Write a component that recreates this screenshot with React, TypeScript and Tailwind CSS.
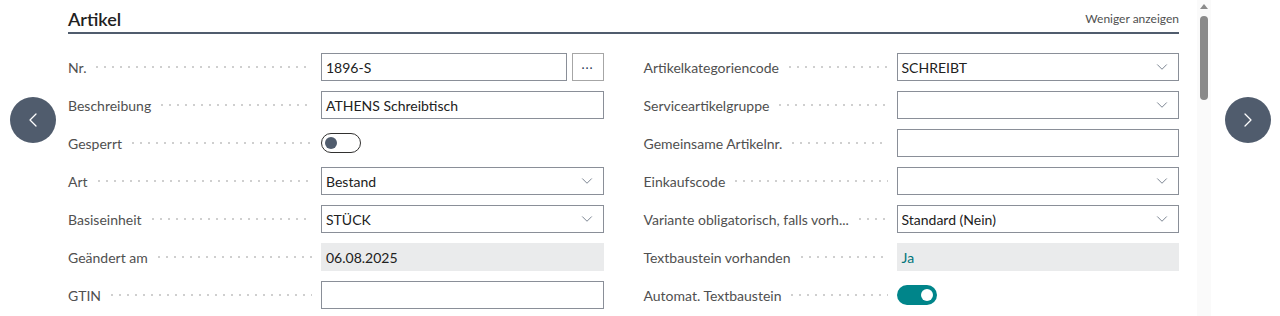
import { ChevronDown, ChevronLeft, ChevronRight } from 'lucide-react';

type Field = {
  label: string;
  kind: 'text' | 'select' | 'readonly' | 'toggle' | 'lookup';
  value?: string;
  on?: boolean;
  teal?: boolean;
};

const left: Field[] = [
  { label: 'Nr.', kind: 'lookup', value: '1896-S' },
  { label: 'Beschreibung', kind: 'text', value: 'ATHENS Schreibtisch' },
  { label: 'Gesperrt', kind: 'toggle', on: false },
  { label: 'Art', kind: 'select', value: 'Bestand' },
  { label: 'Basiseinheit', kind: 'select', value: 'STÜCK' },
  { label: 'Geändert am', kind: 'readonly', value: '06.08.2025' },
  { label: 'GTIN', kind: 'text', value: '' },
];

const right: Field[] = [
  { label: 'Artikelkategoriencode', kind: 'select', value: 'SCHREIBT' },
  { label: 'Serviceartikelgruppe', kind: 'select', value: '' },
  { label: 'Gemeinsame Artikelnr.', kind: 'text', value: '' },
  { label: 'Einkaufscode', kind: 'select', value: '' },
  { label: 'Variante obligatorisch, falls vorh...', kind: 'select', value: 'Standard (Nein)' },
  { label: 'Textbaustein vorhanden', kind: 'readonly', value: 'Ja', teal: true },
  { label: 'Automat. Textbaustein', kind: 'toggle', on: true },
];

function Control({ f }: { f: Field }) {
  if (f.kind === 'toggle') {
    return f.on ? (
      <div className="h-[20px] w-[40px] rounded-full bg-[#00858a] flex items-center justify-end pr-[4px]">
        <div className="h-[12px] w-[12px] rounded-full bg-white" />
      </div>
    ) : (
      <div className="h-[20px] w-[40px] rounded-full border border-[#323130] flex items-center pl-[3px]">
        <div className="h-[12px] w-[12px] rounded-full bg-[#505c6d]" />
      </div>
    );
  }
  if (f.kind === 'readonly') {
    return (
      <div className={`h-[28px] bg-[#eaebec] flex items-center px-[5px] ${f.teal ? 'text-[#00747a]' : 'text-[#212121]'}`}>
        {f.value}
      </div>
    );
  }
  if (f.kind === 'lookup') {
    return (
      <div className="flex gap-[5px]">
        <div className="h-[28px] flex-1 border border-[#8a8f98] flex items-center px-[4px] text-[#212121]">{f.value}</div>
        <div className="h-[28px] w-[32px] border border-[#a6a6a6] flex items-center justify-center text-[#2b3a55] text-[13px] tracking-[1px] leading-none pb-[6px]">
          ...
        </div>
      </div>
    );
  }
  return (
    <div className="h-[28px] border border-[#8a8f98] flex items-center pl-[4px] pr-[7px] text-[#212121]">
      <span className="flex-1">{f.value}</span>
      {f.kind === 'select' && <ChevronDown size={18} strokeWidth={1} className="text-[#505c6d]" />}
    </div>
  );
}

function Row({ f }: { f: Field }) {
  return (
    <div className="flex items-center h-[38px]">
      <div className="w-[253px] flex items-center pr-[9px] shrink-0">
        <span className="text-[#505050] whitespace-nowrap">{f.label}</span>
        <div className="flex-1 ml-[7px] h-[2px] bg-[radial-gradient(circle,#cfcfcf_1px,transparent_1.2px)] bg-[length:8px_2px] bg-repeat-x" />
      </div>
      <div className="flex-1">
        <Control f={f} />
      </div>
    </div>
  );
}

export default function App() {
  return (
    <div className="relative h-[316px] w-[1280px] bg-white overflow-hidden text-[14px] font-['Segoe_UI','Lato','Open_Sans',sans-serif]">
      <div className="flex h-full">
        <div className="w-[1179px] pl-[68px]">
          <div className="flex items-end justify-between h-[34px] border-b-2 border-[#505c6d] pb-[3px]">
            <h2 className="text-[18px] font-semibold text-[#212121] leading-none pb-[1px]">Artikel</h2>
            <span className="text-[12px] text-[#505050] leading-none pb-[4px]">Weniger anzeigen</span>
          </div>
          <div className="grid grid-cols-2 gap-x-[40px] pt-[14px]">
            <div>
              {left.map(f => <Row key={f.label} f={f} />)}
            </div>
            <div>
              {right.map(f => <Row key={f.label} f={f} />)}
            </div>
          </div>
        </div>
        <div className="ml-[18px] w-[14px] h-full bg-[#fafafa] flex flex-col items-center pt-[4px]">
          <div className="w-0 h-0 border-l-[4px] border-r-[4px] border-b-[5px] border-l-transparent border-r-transparent border-b-[#8a8a8a]" />
          <div className="mt-[7px] w-[8px] h-[84px] rounded-full bg-[#8a8a8a]" />
        </div>
      </div>
      <button className="absolute left-[10px] top-[97px] h-[46px] w-[46px] rounded-full bg-[#505c6d] flex items-center justify-center text-white">
        <ChevronLeft size={24} strokeWidth={1.25} />
      </button>
      <button className="absolute left-[1225px] top-[97px] h-[46px] w-[46px] rounded-full bg-[#505c6d] flex items-center justify-center text-white">
        <ChevronRight size={24} strokeWidth={1.25} />
      </button>
    </div>
  );
}
